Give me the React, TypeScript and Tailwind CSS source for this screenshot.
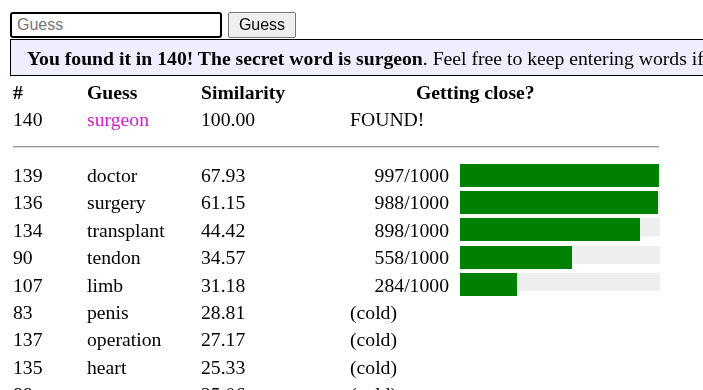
import React from 'react';

type Guess = {
  n: number;
  word: string;
  sim: string;
  rank?: number;
};

const guesses: Guess[] = [
  { n: 139, word: 'doctor', sim: '67.93', rank: 997 },
  { n: 136, word: 'surgery', sim: '61.15', rank: 988 },
  { n: 134, word: 'transplant', sim: '44.42', rank: 898 },
  { n: 90, word: 'tendon', sim: '34.57', rank: 558 },
  { n: 107, word: 'limb', sim: '31.18', rank: 284 },
  { n: 83, word: 'penis', sim: '28.81' },
  { n: 137, word: 'operation', sim: '27.17' },
  { n: 135, word: 'heart', sim: '25.33' },
  { n: 88, word: 'organ', sim: '25.06' },
];

const Row = ({ g }: { g: Guess }) => (
  <div className="flex h-[27.4px] items-center">
    <div className="w-[74px]">{g.n}</div>
    <div className="w-[114px]">{g.word}</div>
    <div className="w-[149px]">{g.sim}</div>
    {g.rank ? (
      <div className="flex h-full items-center">
        <span className="w-[99px] text-right">{g.rank}/1000</span>
        <div className="ml-[11px] mt-[2.4px] h-[18px] w-[200px] self-start bg-[#eeeeee]">
          <div
            className="h-[23px] bg-[#008000]"
            style={{ width: `${(g.rank / 1000) * 200}px` }}
          />
        </div>
      </div>
    ) : (
      <div>(cold)</div>
    )}
  </div>
);

export default function App() {
  return (
    <div className="relative h-[390px] w-[703px] overflow-hidden bg-white text-black">
      <div className="flex items-center gap-[6px] pl-[10px] pt-[12px] font-['Liberation_Sans',Arial,sans-serif] text-[16px]">
        <input
          className="h-[26px] w-[212px] rounded-[3px] border-2 border-black px-[5px] outline-none placeholder:text-[#757575]"
          placeholder="Guess"
          autoFocus
        />
        <button className="h-[26px] w-[68px] rounded-[2px] border border-[#767676] bg-[#efefef] text-black">
          Guess
        </button>
      </div>
      <div className="ml-[10px] mt-[1px] h-[37px] w-[1000px] whitespace-nowrap border border-black bg-[#eeeeff] pl-[16px] pt-[7px] font-['Liberation_Serif','Times_New_Roman',serif] text-[19.7px] leading-[23px]">
        <b>You found it in 140! The secret word is surgeon</b>. Feel free to
        keep entering words if you are curious about the similarity to other
        words.
      </div>
      <div className="mt-[2.5px] pl-[13px] font-['Liberation_Serif','Times_New_Roman',serif] text-[19.7px] leading-[22px]">
        <div className="flex h-[27px] items-center font-bold">
          <div className="w-[74px]">#</div>
          <div className="w-[114px]">Guess</div>
          <div className="w-[149px]">Similarity</div>
          <div className="pl-[66px]">Getting close?</div>
        </div>
        <div className="flex h-[27px] items-center">
          <div className="w-[74px]">140</div>
          <div className="w-[114px] text-[#cc22cc]">surgeon</div>
          <div className="w-[149px]">100.00</div>
          <div>FOUND!</div>
        </div>
        <div className="flex h-[28.8px] items-center">
          <div className="h-[2px] w-[646px] border-b border-t border-[#9a9a9a] border-b-[#d8d8d8]" />
        </div>
        {guesses.map((g) => (
          <Row key={g.n} g={g} />
        ))}
      </div>
    </div>
  );
}
